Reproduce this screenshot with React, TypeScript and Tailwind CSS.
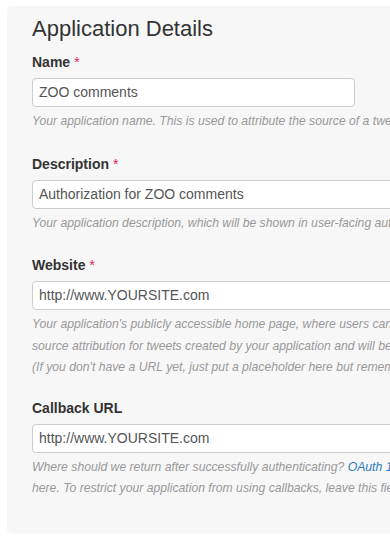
// Application Details form panel

const font = { fontFamily: '"Liberation Sans", Arial, Helvetica, sans-serif' }

function Label({ text, required }: { text: string; required?: boolean }) {
  return (
    <div className="h-[20px] text-[14px] leading-[20px] font-bold text-[#333]">
      {text}
      {required && <span className="ml-[4px] font-normal text-[#e0245e]">*</span>}
    </div>
  )
}

function Field({
  label,
  required,
  value,
  width,
  gap,
  children,
}: {
  label: string
  required?: boolean
  value: string
  width?: string
  gap?: string
  children: React.ReactNode
}) {
  return (
    <div className={gap ?? "mb-[21px]"}>
      <Label text={label} required={required} />
      <div
        className={`mt-[6px] h-[29px] shrink-0 rounded-[4px] border border-[#ccc] bg-white px-[6px] text-[14px] leading-[27px] text-[#555] whitespace-nowrap ${
          width ?? "w-[420px]"
        }`}
      >
        {value}
      </div>
      <div className="mt-[4px] text-[12.2px] italic leading-[21.5px] text-[#999] whitespace-nowrap">
        {children}
      </div>
    </div>
  )
}

export default function App() {
  return (
    <div className="h-[543px] w-[390px] overflow-hidden bg-white pt-[6px] pl-[7px]" style={font}>
      <div className="h-[528px] w-[420px] rounded-[5px] bg-[#f7f7f7] pl-[25px] pt-[8px]">
        <h2 className="h-[36px] text-[22px] leading-[30px] text-[#333]">Application Details</h2>
        <div className="mt-[2px]">
          <Field label="Name" required value="ZOO comments" width="w-[323px]">
            Your application name. This is used to attribute the source of a tweet and in user-facing authorization screens.
          </Field>
          <Field label="Description" required value="Authorization for ZOO comments">
            Your application description, which will be shown in user-facing authorization screens.
          </Field>
          <Field label="Website" required value="http://www.YOURSITE.com" gap="mb-[19px]">
            <div>Your application's publicly accessible home page, where users can go to download, make use of, or find out more</div>
            <div>source attribution for tweets created by your application and will be shown in user-facing authorization screens.</div>
            <div>(If you don't have a URL yet, just put a placeholder here but remember to change it later.)</div>
          </Field>
          <Field label="Callback URL" value="http://www.YOURSITE.com">
            <div>
              Where should we return after successfully authenticating?{" "}
              <span className="text-[#2b7bb9]">OAuth 1.0a</span> applications should explicitly specify
            </div>
            <div>here. To restrict your application from using callbacks, leave this field blank.</div>
          </Field>
        </div>
      </div>
    </div>
  )
}
